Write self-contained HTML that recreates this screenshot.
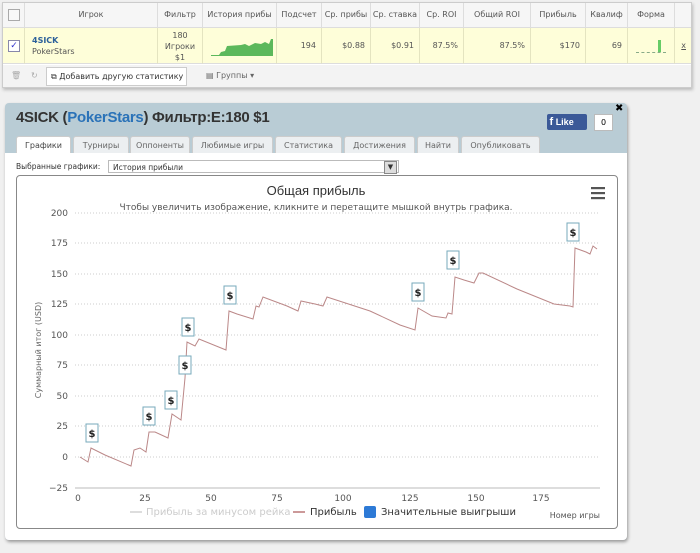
<!DOCTYPE html>
<html><head><meta charset="utf-8"><style>
body{margin:0;width:700px;height:553px;background:#f0f0f0;font-family:"DejaVu Sans","Liberation Sans",sans-serif;position:relative;overflow:hidden}
.a{position:absolute}
#tbl{left:2px;top:2px;width:688px;height:84px;background:#fff;border:1px solid #ccc;box-shadow:1px 2px 3px #bbb;font-size:8px;color:#555}
.h{top:0;height:24px;line-height:24px;text-align:center;border-right:1px solid #ddd;background:#f6f6f6;border-bottom:1px solid #ddd;overflow:hidden;white-space:nowrap}
.r{top:25px;height:36px;background:#fefed9;border-right:1px solid #e4e4c0;border-bottom:1px solid #ddd;line-height:36px;text-align:right;padding-right:5px;box-sizing:border-box}
#panel{left:5px;top:103px;width:622px;height:437px;background:#b9ccd5;border-radius:4px;box-shadow:1px 2px 3px #999}
.tab{top:33px;height:17px;line-height:17px;background:#eceff1;border:1px solid #ccc;border-bottom:none;font-size:8px;color:#666;text-align:center;border-radius:3px 3px 0 0}
</style></head><body>
<div id="tbl" class="a">
<div class="a h" style="left:0;width:21px"><div class="a" style="left:5px;top:6px;width:10px;height:10px;border:1px solid #aaa;background:#f8f8f8"></div></div>
<div class="a h" style="left:22px;width:132px">Игрок</div>
<div class="a h" style="left:155px;width:44px">Фильтр</div>
<div class="a h" style="left:200px;width:73px">История прибы</div>
<div class="a h" style="left:274px;width:44px">Подсчет</div>
<div class="a h" style="left:319px;width:48px">Ср. прибы</div>
<div class="a h" style="left:368px;width:48px">Ср. ставка</div>
<div class="a h" style="left:417px;width:43px">Ср. ROI</div>
<div class="a h" style="left:461px;width:66px">Общий ROI</div>
<div class="a h" style="left:528px;width:54px">Прибыль</div>
<div class="a h" style="left:583px;width:41px">Квалиф</div>
<div class="a h" style="left:625px;width:46px">Форма</div>
<div class="a h" style="left:672px;width:16px;border-right:none"></div>
<div class="a r" style="left:0;width:22px"><div class="a" style="left:5px;top:12px;width:10px;height:10px;border:1px solid #88a;background:#fff;line-height:10px;font-size:9px;color:#33c;text-align:center">✓</div></div>
<div class="a r" style="left:22px;width:133px;text-align:left;line-height:11px;padding:7px 0 0 7px"><b style="color:#2a5f9a">4SICK</b><br>PokerStars</div>
<div class="a r" style="left:155px;width:45px;text-align:center;line-height:11px;padding:2px 0 0 0">180<br>Игроки<br>$1</div>
<div class="a r" style="left:200px;width:74px"><svg class="a" style="left:8px;top:8px" width="62" height="20"><path d="M0 19 L8 19 L10 16 L14 15 L16 10 L30 9 L34 8 L38 10 L44 7 L50 8 L54 6 L58 8 L60 3 L62 3 L62 20 L0 20Z" fill="#5cb85c"/></svg></div>
<div class="a r" style="left:274px;width:45px">194</div>
<div class="a r" style="left:319px;width:49px">$0.88</div>
<div class="a r" style="left:368px;width:49px">$0.91</div>
<div class="a r" style="left:417px;width:44px">87.5%</div>
<div class="a r" style="left:461px;width:67px">87.5%</div>
<div class="a r" style="left:528px;width:55px">$170</div>
<div class="a r" style="left:583px;width:42px">69</div>
<div class="a r" style="left:625px;width:47px"><div class="a" style="left:8px;top:24px;width:30px;border-top:1px dashed #8a8"></div><div class="a" style="left:30px;top:12px;width:3px;height:12px;background:#6c6"></div></div>
<div class="a r" style="left:672px;width:16px;border-right:none;text-decoration:underline">x</div>
<div class="a" style="left:0;top:62px;width:688px;height:22px;background:#f3f3f3;line-height:22px;font-size:8px;color:#333">
<span class="a" style="left:8px;color:#aaa">🗑</span><span class="a" style="left:28px;color:#aaa">↻</span>
<span class="a" style="left:43px;top:2px;height:17px;line-height:17px;border:1px solid #ccc;background:#fff;padding:0 3px 0 4px;white-space:nowrap">⧉ Добавить другую статистику</span>
<span class="a" style="left:203px;color:#666">▤ Группы ▾</span></div>
</div>

<div id="panel" class="a">
<div class="a" style="left:11px;top:6px;font-family:'Liberation Sans',sans-serif;font-weight:bold;font-size:15px;color:#333;letter-spacing:-0.3px">4SICK (<span style="color:#2a72b8">PokerStars</span>) Фильтр:E:180 $1</div>
<div class="a" style="left:542px;top:11px;width:40px;height:16px;background:#3b5998;color:#fff;font:bold 9px 'Liberation Sans';line-height:16px;border-radius:2px">&nbsp;<b style="font-size:11px">f</b> Like</div>
<div class="a" style="left:589px;top:11px;width:17px;height:15px;background:#fff;border:1px solid #bbb;font-size:8px;text-align:center;line-height:15px">0</div>
<div class="a" style="left:610px;top:0px;font-size:10px;font-weight:bold">✖</div>
<div class="a tab" style="left:11px;width:53px;background:#fff;color:#444;height:18px">Графики</div>
<div class="a tab" style="left:68px;width:54px">Турниры</div>
<div class="a tab" style="left:125px;width:58px">Оппоненты</div>
<div class="a tab" style="left:187px;width:79px">Любимые игры</div>
<div class="a tab" style="left:270px;width:65px">Статистика</div>
<div class="a tab" style="left:339px;width:69px">Достижения</div>
<div class="a tab" style="left:412px;width:40px">Найти</div>
<div class="a tab" style="left:456px;width:77px">Опубликовать</div>
<div class="a" style="left:0;top:50px;width:622px;height:387px;background:#fff;border-radius:0 0 4px 4px"></div>
<div class="a" style="left:11px;top:59px;font-size:7.5px;color:#333">Выбранные графики:</div>
<div class="a" style="left:103px;top:57px;width:291px;height:13px;border:1px solid #bbb;font-size:7.5px;line-height:13px;padding-left:4px;box-sizing:border-box;color:#333">История прибыли<div class="a" style="right:1px;top:0;width:11px;height:11px;border:1px solid #888;background:#ddd;font-size:7px;text-align:center;line-height:11px">▼</div></div>
<div class="a" style="left:11px;top:72px;width:600px;height:352px;border:1px solid #888;border-radius:4px;background:#fff"></div>
</div>

<svg class="a" style="left:0;top:0" width="700" height="553" font-family="DejaVu Sans, sans-serif">
<text x="316" y="195" font-size="13" text-anchor="middle" fill="#333" font-family="Liberation Sans">Общая прибыль</text>
<text x="316" y="210" font-size="9" text-anchor="middle" fill="#555">Чтобы увеличить изображение, кликните и перетащите мышкой внутрь графика.</text>
<g fill="#555"><rect x="591" y="187" width="14" height="2.2"/><rect x="591" y="192" width="14" height="2.2"/><rect x="591" y="197" width="14" height="2.2"/></g>
<g stroke="#ccc" stroke-dasharray="1,2">
<line x1="75" x2="600" y1="213" y2="213"/><line x1="75" x2="600" y1="243" y2="243"/><line x1="75" x2="600" y1="274" y2="274"/><line x1="75" x2="600" y1="304" y2="304"/><line x1="75" x2="600" y1="335" y2="335"/><line x1="75" x2="600" y1="365" y2="365"/><line x1="75" x2="600" y1="396" y2="396"/><line x1="75" x2="600" y1="426" y2="426"/><line x1="75" x2="600" y1="457" y2="457"/></g>
<line x1="75" x2="600" y1="488" y2="488" stroke="#bbb"/>
<g font-size="9" fill="#555" text-anchor="end">
<text x="68" y="216">200</text><text x="68" y="246">175</text><text x="68" y="277">150</text><text x="68" y="307">125</text><text x="68" y="338">100</text><text x="68" y="368">75</text><text x="68" y="399">50</text><text x="68" y="429">25</text><text x="68" y="460">0</text><text x="68" y="491">−25</text></g>
<g font-size="9" fill="#555" text-anchor="middle">
<text x="78" y="501">0</text><text x="145" y="501">25</text><text x="211" y="501">50</text><text x="277" y="501">75</text><text x="343" y="501">100</text><text x="410" y="501">125</text><text x="476" y="501">150</text><text x="541" y="501">175</text></g>
<text transform="translate(41,350) rotate(-90)" font-size="8" fill="#666" text-anchor="middle">Суммарный итог (USD)</text>
<polyline fill="none" stroke="#b88" stroke-width="1" points="80,457 88,462 91,448 105,455 131,466 134,450 140,448 146,452 149,432 155,432 168,438 172,414 181,420 185,378 187,342 195,346 199,339 226,350 229,311 237,314 253,319 256,306 259,307 263,297 287,306 298,311 301,301 315,304 323,306 327,297 370,311 400,325 415,330 418,308 432,316 446,318 448,313 452,314 455,277 464,280 474,283 479,273 483,273 517,289 554,304 570,306 573,307 575,248 586,252 590,254 593,246 597,249"/>
<g font-size="10" font-weight="bold" text-anchor="middle" fill="#222">
<g><rect x="86" y="424" width="12" height="18" fill="#fff" stroke="#7ab"/><text x="92" y="437">$</text></g>
<g><rect x="143" y="407" width="12" height="18" fill="#fff" stroke="#7ab"/><text x="149" y="420">$</text></g>
<g><rect x="165" y="391" width="12" height="18" fill="#fff" stroke="#7ab"/><text x="171" y="404">$</text></g>
<g><rect x="179" y="356" width="12" height="18" fill="#fff" stroke="#7ab"/><text x="185" y="369">$</text></g>
<g><rect x="182" y="318" width="12" height="18" fill="#fff" stroke="#7ab"/><text x="188" y="331">$</text></g>
<g><rect x="224" y="286" width="12" height="18" fill="#fff" stroke="#7ab"/><text x="230" y="299">$</text></g>
<g><rect x="412" y="283" width="12" height="18" fill="#fff" stroke="#7ab"/><text x="418" y="296">$</text></g>
<g><rect x="447" y="251" width="12" height="18" fill="#fff" stroke="#7ab"/><text x="453" y="264">$</text></g>
<g><rect x="567" y="223" width="12" height="18" fill="#fff" stroke="#7ab"/><text x="573" y="236">$</text></g></g>
<g font-size="10">
<line x1="130" x2="142" y1="512" y2="512" stroke="#ddd" stroke-width="2"/><text x="146" y="515" fill="#ccc">Прибыль за минусом рейка</text>
<line x1="293" x2="305" y1="512" y2="512" stroke="#c99" stroke-width="2"/><text x="310" y="515" fill="#333">Прибыль</text>
<rect x="364" y="506" width="12" height="12" rx="2" fill="#2d7ad6"/><text x="381" y="515" fill="#333">Значительные выигрыши</text>
<text x="600" y="518" font-size="8" fill="#555" text-anchor="end">Номер игры</text></g>
</svg>
</body></html>
